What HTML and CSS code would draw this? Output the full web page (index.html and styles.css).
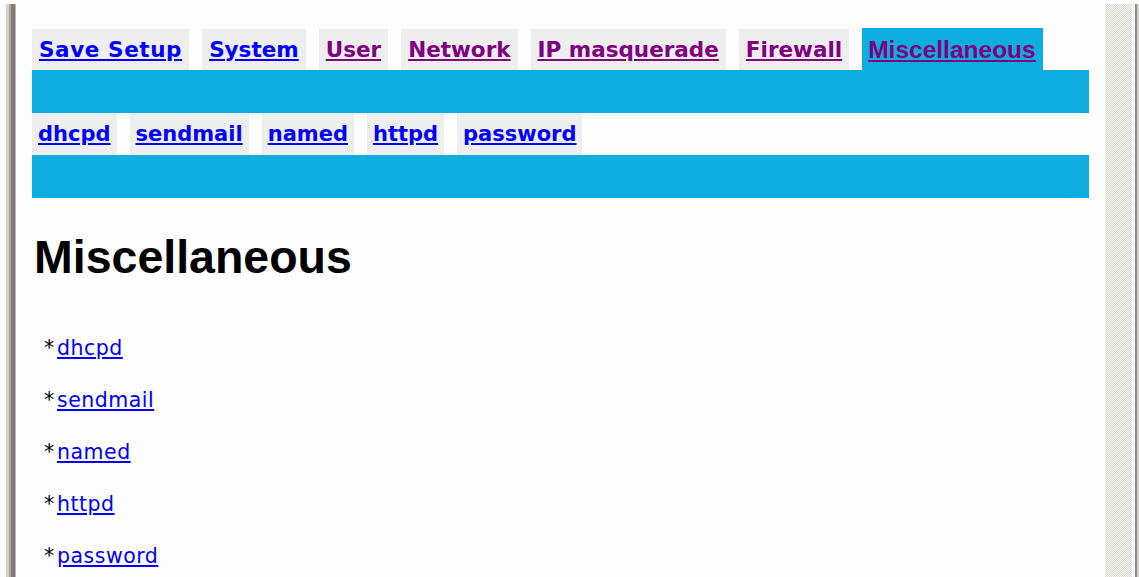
FILE: index.html
```html
<!DOCTYPE html>
<html lang="en">
<head>
<meta charset="utf-8">
<title>Miscellaneous</title>
<link rel="stylesheet" href="styles.css">
</head>
<body>
<div class="window">
  <div class="frame-left"></div>
  <main class="page">
    <nav class="tabs">
      <div class="tab-row">
        <a class="tab wide" href="#save">Save Setup</a>
        <a class="tab" href="#system">System</a>
        <a class="tab visited" href="#user">User</a>
        <a class="tab visited" href="#network">Network</a>
        <a class="tab visited" href="#ipmasq">IP masquerade</a>
        <a class="tab visited" href="#firewall">Firewall</a>
        <a class="tab visited active" href="#misc">Miscellaneous</a>
      </div>
      <div class="bar"></div>
      <div class="tab-row sub">
        <a class="tab" href="#dhcpd">dhcpd</a>
        <a class="tab" href="#sendmail">sendmail</a>
        <a class="tab" href="#named">named</a>
        <a class="tab" href="#httpd">httpd</a>
        <a class="tab" href="#password">password</a>
      </div>
      <div class="bar"></div>
    </nav>

    <h1 class="title">Miscellaneous</h1>

    <ul class="links">
      <li><span class="bullet">*</span><a href="#dhcpd">dhcpd</a></li>
      <li><span class="bullet">*</span><a href="#sendmail">sendmail</a></li>
      <li><span class="bullet">*</span><a href="#named">named</a></li>
      <li><span class="bullet">*</span><a href="#httpd">httpd</a></li>
      <li><span class="bullet">*</span><a href="#password">password</a></li>
    </ul>
  </main>
  <div class="scrollbar">
    <div class="scroll-track"></div>
    <div class="scroll-edge"></div>
  </div>
</div>
</body>
</html>
```

FILE: styles.css
```css
* {
  box-sizing: border-box;
}

html,
body {
  height: 100%;
  margin: 0;
  overflow: hidden;
}

body {
  background: #fdfdfd;
  padding-top: 4px;
  font-family: "DejaVu Sans", sans-serif;
  color: #000;
}

.window {
  display: flex;
  height: 100%;
}

/* window border on the left */
.frame-left {
  width: 16px;
  flex: none;
  background: linear-gradient(to right,
    #fdfdfd 0 6px,
    #d6d2ca 6px 9px,
    #aaa69e 9px 11px,
    #827e76 11px 15px,
    #b8b4ac 15px 16px);
}

.page {
  flex: 1;
  padding: 24px 16px 0 16px;
  min-width: 0;
}

/* tab navigation */
.tab-row {
  display: flex;
  align-items: flex-end;
  gap: 13px;
  height: 42px;
}

.tab {
  display: block;
  height: 41px;
  line-height: 41px;
  padding: 0 7px;
  background: #eeeeee;
  font-family: "DejaVu Sans", sans-serif;
  font-weight: bold;
  font-size: 21.5px;
  color: #0000ff;
  text-decoration: underline;
  white-space: nowrap;
}

.tab.wide {
  letter-spacing: 0.6px;
}

.tab.visited {
  color: #800080;
}

.tab.active {
  height: 42px;
  line-height: 41px;
  padding: 1px 7px 0 6px;
  background: #0daedf;
  font-family: "Liberation Sans", Arial, sans-serif;
  font-size: 24.5px;
}

.tab-row.sub .tab {
  height: 42px;
  line-height: 42px;
  padding: 0 6px;
  font-size: 21px;
}

.bar {
  height: 43px;
  background: #0daedf;
}

/* page title */
.title {
  margin: 32px 0 0 2px;
  font-family: "Liberation Sans", Arial, sans-serif;
  font-weight: bold;
  font-size: 46.5px;
  line-height: 54px;
}

/* link list */
.links {
  list-style: none;
  margin: 51px 0 0 12px;
  padding: 0;
  display: flex;
  flex-direction: column;
  gap: 26px;
  font-family: "DejaVu Sans", sans-serif;
  font-size: 20.5px;
  line-height: 26px;
}

.bullet {
  display: inline-block;
  width: 13px;
}

.links a {
  color: #0000ff;
  letter-spacing: 0.5px;
}

/* scrollbar on the right */
.scrollbar {
  width: 34px;
  flex: none;
  display: flex;
}

.scroll-track {
  width: 27px;
  background-color: #ecebe7;
  background-image: repeating-conic-gradient(#f6f5f2 0 25%, #dedbd4 0 50%);
  background-size: 2px 2px;
}

.scroll-edge {
  flex: 1;
  background: linear-gradient(to right,
    #fafafa 0 3px,
    #8c8a86 3px 5px,
    #d2d0cc 5px 7px);
}
```
